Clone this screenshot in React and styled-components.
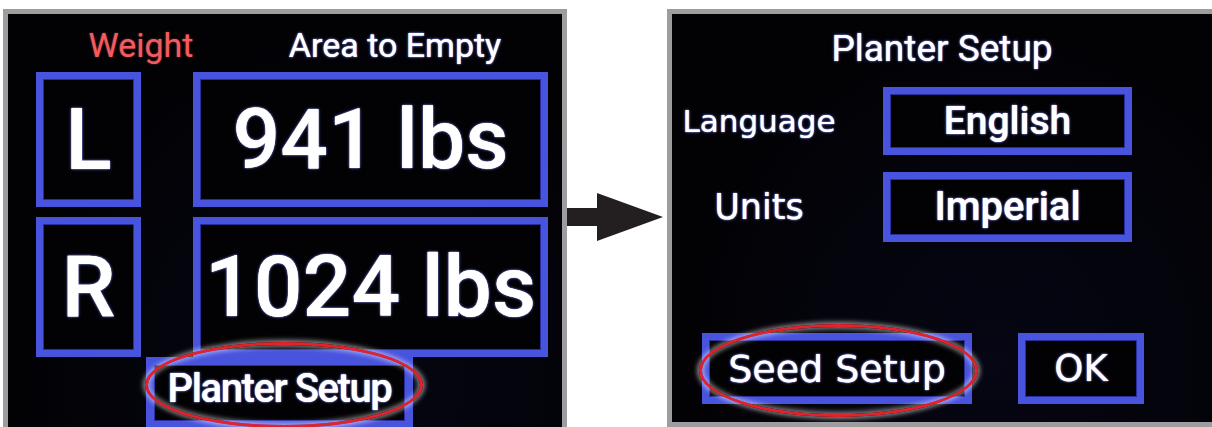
import styled, { createGlobalStyle } from 'styled-components';

const GlobalStyle = createGlobalStyle`
  html, body {
    margin: 0;
    padding: 0;
    background: #ffffff;
    overflow: hidden;
  }
`;

const blue = '#4853de';
const glow = '0 0 1px #ffffff, 0 0 3px rgba(110, 120, 255, 0.95)';

const Page = styled.div`
  display: flex;
  align-items: flex-start;
  box-sizing: border-box;
  height: 427px;
  padding: 9px 0 0 3px;
`;

const Screen = styled.div`
  box-sizing: border-box;
  flex-shrink: 0;
  display: flex;
  flex-direction: column;
  width: ${props => props.$width}px;
  height: ${props => props.$height}px;
  border: 5px solid #9d9d9f;
  border-right: ${props => (props.$openRight ? 'none' : '5px solid #9d9d9f')};
  border-bottom: ${props => (props.$openBottom ? 'none' : '5px solid #9d9d9f')};
  background: radial-gradient(ellipse at 60% 85%, #060614 0%, #020205 70%);
`;

const ArrowSlot = styled.div`
  align-self: center;
  display: flex;
  width: 100px;
  margin-top: -2px;
  flex-shrink: 0;
`;

const HeaderRow = styled.div`
  display: grid;
  grid-template-columns: 200px 300px;
  column-gap: 4px;
  padding: 11px 0 0 33px;
`;

const HeaderLabel = styled.div`
  font-family: Roboto, 'Liberation Sans', sans-serif;
  font-weight: 400;
  font-size: 34px;
  line-height: 40px;
  text-align: center;
  color: ${props => props.$color};
  text-shadow: ${props => props.$shadow};
`;

const ReadoutGrid = styled.div`
  display: grid;
  grid-template-columns: 105px 355px;
  grid-template-rows: 135px 140px;
  column-gap: 52px;
  row-gap: 10px;
  margin-top: 7px;
  padding-left: 28px;
`;

const Box = styled.div`
  box-sizing: border-box;
  display: flex;
  align-items: center;
  justify-content: center;
  border: ${props => props.$border || 7}px solid ${blue};
  box-shadow: inset 0 0 0 1px #2a2f9c;
  background: #020205;
  color: #ffffff;
  text-shadow: ${glow};
  font-family: ${props => props.$font || "Roboto, 'Liberation Sans', sans-serif"};
  font-weight: ${props => props.$weight || 500};
  font-size: ${props => props.$size}px;
  line-height: 1;
  letter-spacing: ${props => props.$tracking || 0}px;
  white-space: nowrap;
`;

const PlanterButton = styled(Box)`
  position: relative;
  width: 267px;
  height: 72px;
  margin-left: 138px;
  align-items: flex-start;
  padding-top: 4px;
`;

const Circled = styled.div`
  position: absolute;
  left: ${props => props.$left}px;
  top: ${props => props.$top}px;
  width: ${props => props.$w}px;
  height: ${props => props.$h}px;
  box-sizing: border-box;
  border: 3px solid #e3232b;
  border-radius: 50%;
  box-shadow: 0 0 5px 2px rgba(255, 255, 255, 0.55),
    inset 0 0 5px 2px rgba(255, 255, 255, 0.5);
  pointer-events: none;
`;

const Title = styled.div`
  padding-top: 13px;
  width: 540px;
  font-family: Roboto, 'Liberation Sans', sans-serif;
  font-weight: 400;
  font-size: 37px;
  line-height: 44px;
  text-align: center;
  color: #ffffff;
  text-shadow: ${glow};
`;

const FormGrid = styled.div`
  display: grid;
  grid-template-columns: 174px 249px;
  grid-template-rows: 68px 70px;
  column-gap: 37px;
  row-gap: 17px;
  margin-top: 16px;
`;

const FieldLabel = styled.div`
  display: flex;
  align-items: center;
  justify-content: center;
  font-family: 'DejaVu Sans', sans-serif;
  font-size: ${props => props.$size}px;
  color: #ffffff;
  text-shadow: ${glow};
`;

const ButtonRow = styled.div`
  display: flex;
  gap: 46px;
  margin-top: 91px;
  padding-left: 30px;
`;

const ActionButton = styled(Box)`
  position: relative;
  width: ${props => props.$w}px;
  height: 71px;
`;

const ArrowIcon = () => (
  <svg width="96" height="48" viewBox="0 0 96 48">
    <path d="M0 15 H30 V0 L96 24 L30 48 V33 H0 Z" fill="#231f20" />
  </svg>
);

export default function App() {
  return (
    <>
      <GlobalStyle />
      <Page>
        <Screen $width={564} $height={440} $openBottom>
          <HeaderRow>
            <HeaderLabel $color="#f35b5e" $shadow="0 0 2px rgba(255, 90, 90, 0.6)">Weight</HeaderLabel>
            <HeaderLabel $color="#ffffff" $shadow={glow}>Area to Empty</HeaderLabel>
          </HeaderRow>
          <ReadoutGrid>
            <Box $size={86}>L</Box>
            <Box $size={84}>941 lbs</Box>
            <Box $size={86}>R</Box>
            <Box $size={86}>1024 lbs</Box>
          </ReadoutGrid>
          <PlanterButton $size={40} $border={8} $tracking={-1.4}>
            Planter Setup
            <Circled $left={-9} $top={-23} $w={278} $h={86} />
          </PlanterButton>
        </Screen>

        <ArrowSlot>
          <ArrowIcon />
        </ArrowSlot>

        <Screen $width={545} $height={418} $openRight>
          <Title>Planter Setup</Title>
          <FormGrid>
            <FieldLabel $size={31}>Language</FieldLabel>
            <Box $size={39}>English</Box>
            <FieldLabel $size={35}>Units</FieldLabel>
            <Box $size={40}>Imperial</Box>
          </FormGrid>
          <ButtonRow>
            <ActionButton $w={270} $size={38} $font="'DejaVu Sans', sans-serif" $weight={400}>
              Seed Setup
              <Circled $left={-10} $top={-16} $w={279} $h={93} />
            </ActionButton>
            <ActionButton $w={126} $size={37} $font="'DejaVu Sans', sans-serif" $weight={400}>
              OK
            </ActionButton>
          </ButtonRow>
        </Screen>
      </Page>
    </>
  );
}
